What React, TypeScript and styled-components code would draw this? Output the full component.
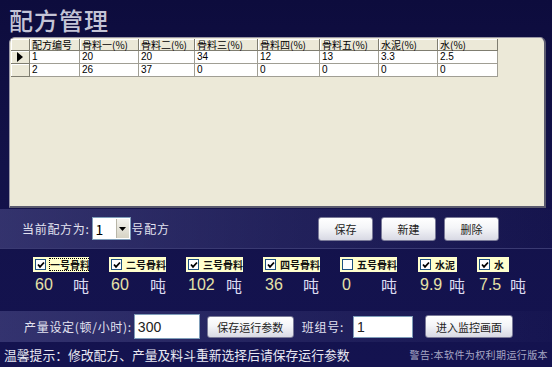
import styled, { createGlobalStyle } from 'styled-components';

const GlobalStyle = createGlobalStyle`
  html, body {
    margin: 0;
    padding: 0;
    background: #0e0d40;
  }
`;

const CJK = `"Noto Sans CJK SC", "Noto Sans", sans-serif`;

const Page = styled.div`
  width: 552px;
  height: 367px;
  overflow: hidden;
  display: flex;
  flex-direction: column;
  background: linear-gradient(180deg, #0d0c3d 0%, #131249 45%, #141350 100%);
  font-family: ${CJK};
`;

const Header = styled.div`
  height: 37px;
  display: flex;
  align-items: flex-end;
  padding-left: 9px;
  box-sizing: border-box;
  padding-bottom: 2px;
`;

const Title = styled.div`
  font-size: 24px;
  line-height: 30px;
  font-weight: 500;
  color: #c4c4d6;
  letter-spacing: 1px;
`;

const GridPanel = styled.div`
  margin-left: 9px;
  width: 537px;
  height: 171px;
  box-sizing: border-box;
  background: #ece9d8;
  border: 1px solid #9a98a6;
  border-right: 2px solid #5a5a6e;
  border-bottom: 2px solid #5a5a6e;
  border-radius: 6px 6px 0 0;
  padding: 1px 0 0 1px;
`;

const Table = styled.table`
  border-collapse: collapse;
  table-layout: fixed;
  font-family: ${CJK};
  font-size: 10px;
  color: #000;
`;

const HeadCell = styled.th<{ w: number }>`
  width: ${(p) => p.w}px;
  height: 11px;
  padding: 0 0 0 2px;
  text-align: left;
  font-weight: 400;
  line-height: 11px;
  background: #ece9d8;
  border-right: 1px solid #7f7d70;
  border-bottom: 1px solid #7f7d70;
  box-shadow: inset 1px 1px 0 #fff;
  white-space: nowrap;
`;

const RowHead = styled.td`
  width: 18px;
  height: 12px;
  padding: 0;
  background: #ece9d8;
  border-right: 1px solid #7f7d70;
  border-bottom: 1px solid #7f7d70;
  box-shadow: inset 1px 1px 0 #fff;
`;

const Pointer = styled.div`
  width: 0;
  height: 0;
  margin-left: 6px;
  border-top: 5px solid transparent;
  border-bottom: 5px solid transparent;
  border-left: 6px solid #000;
`;

const Cell = styled.td`
  height: 12px;
  padding: 0 0 0 2px;
  background: #fff;
  border-right: 1px solid #a09e94;
  border-bottom: 1px solid #a09e94;
  font-family: "Liberation Sans", Arial, sans-serif;
  font-size: 10px;
  line-height: 12px;
  white-space: nowrap;
`;

const RecipeBar = styled.div`
  height: 40px;
  margin-top: 1px;
  display: flex;
  align-items: center;
  padding: 0 53px 0 22px;
  box-sizing: border-box;
  background: linear-gradient(90deg, rgba(90, 90, 150, 0.45) 0%, rgba(70, 70, 130, 0.3) 50%, rgba(40, 40, 100, 0.1) 100%);
  border-bottom: 1px solid #3a3a72;
`;

const BarLabel = styled.span<{ gap?: number }>`
  margin-left: ${(p) => p.gap ?? 0}px;
  color: #e2e2f0;
  font-size: 12px;
  letter-spacing: 0.7px;
  white-space: nowrap;
`;

const Combo = styled.div`
  margin-left: 2px;
  width: 39px;
  height: 23px;
  box-sizing: border-box;
  background: #fff;
  border: 1px solid #7f9db9;
  display: flex;
  align-items: center;
  justify-content: space-between;
  padding-left: 3px;
  font-size: 14px;
  color: #000;
`;

const ComboArrow = styled.div`
  width: 12px;
  height: 19px;
  margin-right: 1px;
  background: linear-gradient(180deg, #f4f3ee, #d6d3c4);
  border-left: 1px solid #b8b6a8;
  display: flex;
  align-items: center;
  justify-content: center;
`;

const ButtonGroup = styled.div`
  margin-left: auto;
  display: flex;
  gap: 8px;
`;

const Button = styled.div<{ w: number; h?: number; gap?: number }>`
  margin-left: ${(p) => p.gap ?? 0}px;
  width: ${(p) => p.w}px;
  height: ${(p) => p.h ?? 24}px;
  box-sizing: border-box;
  border: 1px solid #7a7a98;
  border-radius: 3px;
  background: linear-gradient(180deg, #ffffff 0%, #f4f5f8 45%, #d8d9e4 100%);
  display: flex;
  align-items: center;
  justify-content: center;
  font-size: 11px;
  color: #222;
  white-space: nowrap;
`;

const CheckArea = styled.div`
  margin-top: 8px;
  display: flex;
  padding-left: 33px;
`;

const Group = styled.div<{ w: number }>`
  width: ${(p) => p.w}px;
  display: flex;
  flex-direction: column;
`;

const CheckLabel = styled.div<{ w: number }>`
  width: ${(p) => p.w}px;
  height: 15px;
  box-sizing: border-box;
  background: #ffffcc;
  display: flex;
  align-items: center;
  padding-left: 2px;
  gap: 3px;
  font-size: 10px;
  font-weight: 700;
  color: #111;
  white-space: nowrap;
  overflow: hidden;
`;

const LabelText = styled.span<{ focused?: boolean }>`
  outline: ${(p) => (p.focused ? '1px dotted #000' : 'none')};
  outline-offset: -1px;
  line-height: 13px;
  padding: 0 1px;
`;

const Box = styled.div`
  flex: none;
  width: 11px;
  height: 11px;
  box-sizing: border-box;
  background: #fff;
  border: 1px solid #1c5180;
  display: flex;
  align-items: center;
  justify-content: center;
`;

const ValueLine = styled.div`
  margin-top: 3px;
  height: 20px;
  display: flex;
  align-items: center;
  padding-left: 2px;
`;

const Value = styled.span<{ w: number }>`
  width: ${(p) => p.w}px;
  font-family: "Liberation Sans", Arial, sans-serif;
  font-size: 16px;
  color: #e6e2a8;
`;

const Unit = styled.span`
  font-size: 16px;
  color: #dcdcf0;
`;

const ProductionBar = styled.div`
  margin-top: 16px;
  height: 31px;
  display: flex;
  align-items: center;
  padding-left: 24px;
  box-sizing: border-box;
  background: linear-gradient(90deg, rgba(90, 90, 150, 0.45) 0%, rgba(70, 70, 130, 0.3) 50%, rgba(40, 40, 100, 0.1) 100%);
`;

const Input = styled.div<{ w: number; h: number; gap?: number }>`
  margin-left: ${(p) => p.gap ?? 0}px;
  width: ${(p) => p.w}px;
  height: ${(p) => p.h}px;
  box-sizing: border-box;
  background: #fff;
  border: 1px solid #7f9db9;
  padding-left: 3px;
  display: flex;
  align-items: center;
  font-family: "Liberation Sans", Arial, sans-serif;
  font-size: 14px;
  color: #222;
`;

const Footer = styled.div`
  flex: 1;
  display: flex;
  align-items: center;
  justify-content: space-between;
  padding: 0 4px 0 4px;
`;

const Hint = styled.span`
  font-size: 12.8px;
  color: #e8e8f2;
  white-space: nowrap;
`;

const Warning = styled.span`
  font-size: 10px;
  letter-spacing: 0.4px;
  color: #a6a6c4;
  white-space: nowrap;
`;

const Check = () => (
  <svg width="8" height="8" viewBox="0 0 8 8">
    <path d="M1 3.5 L3 5.8 L7 1.5" stroke="#000" strokeWidth="1.8" fill="none" />
  </svg>
);

const columns = [
  { name: '配方编号', w: 47 },
  { name: '骨料一(%)', w: 56 },
  { name: '骨料二(%)', w: 53 },
  { name: '骨料三(%)', w: 60 },
  { name: '骨料四(%)', w: 59 },
  { name: '骨料五(%)', w: 56 },
  { name: '水泥(%)', w: 56 },
  { name: '水(%)', w: 57 },
];

const rows = [
  ['1', '20', '20', '34', '12', '13', '3.3', '2.5'],
  ['2', '26', '37', '0', '0', '0', '0', '0'],
];

const materials = [
  { name: '一号骨料', checked: true, value: '60', gw: 76, lw: 56, vw: 38, focused: true },
  { name: '二号骨料', checked: true, value: '60', gw: 77, lw: 57, vw: 39 },
  { name: '三号骨料', checked: true, value: '102', gw: 77, lw: 57, vw: 38 },
  { name: '四号骨料', checked: true, value: '36', gw: 77, lw: 57, vw: 38 },
  { name: '五号骨料', checked: false, value: '0', gw: 78, lw: 57, vw: 39 },
  { name: '水泥', checked: true, value: '9.9', gw: 59, lw: 39, vw: 29 },
  { name: '水', checked: true, value: '7.5', gw: 60, lw: 32, vw: 31 },
];

export default function App() {
  return (
    <Page>
      <GlobalStyle />
      <Header>
        <Title>配方管理</Title>
      </Header>

      <GridPanel>
        <Table>
          <thead>
            <tr>
              <HeadCell w={16} />
              {columns.map((c) => (
                <HeadCell key={c.name} w={c.w}>
                  {c.name}
                </HeadCell>
              ))}
            </tr>
          </thead>
          <tbody>
            {rows.map((r, i) => (
              <tr key={i}>
                <RowHead>{i === 0 && <Pointer />}</RowHead>
                {r.map((v, j) => (
                  <Cell key={j}>{v}</Cell>
                ))}
              </tr>
            ))}
          </tbody>
        </Table>
      </GridPanel>

      <RecipeBar>
        <BarLabel>当前配方为:</BarLabel>
        <Combo>
          1
          <ComboArrow>
            <svg width="7" height="4" viewBox="0 0 7 4">
              <path d="M0 0 H7 L3.5 4 Z" fill="#000" />
            </svg>
          </ComboArrow>
        </Combo>
        <BarLabel gap={1}>号配方</BarLabel>
        <ButtonGroup>
          <Button w={55}>保存</Button>
          <Button w={55}>新建</Button>
          <Button w={55}>删除</Button>
        </ButtonGroup>
      </RecipeBar>

      <CheckArea>
        {materials.map((m) => (
          <Group key={m.name} w={m.gw}>
            <CheckLabel w={m.lw}>
              <Box>{m.checked && <Check />}</Box>
              <LabelText focused={m.focused}>{m.name}</LabelText>
            </CheckLabel>
            <ValueLine>
              <Value w={m.vw}>{m.value}</Value>
              <Unit>吨</Unit>
            </ValueLine>
          </Group>
        ))}
      </CheckArea>

      <ProductionBar>
        <BarLabel>产量设定(顿/小时):</BarLabel>
        <Input w={66} h={25} gap={2}>300</Input>
        <Button w={87} h={22} gap={7}>保存运行参数</Button>
        <BarLabel gap={8}>班组号:</BarLabel>
        <Input w={60} h={22} gap={9}>1</Input>
        <Button w={88} h={23} gap={12}>进入监控画面</Button>
      </ProductionBar>

      <Footer>
        <Hint>温馨提示：修改配方、产量及料斗重新选择后请保存运行参数</Hint>
        <Warning>警告:本软件为权利期运行版本</Warning>
      </Footer>
    </Page>
  );
}
